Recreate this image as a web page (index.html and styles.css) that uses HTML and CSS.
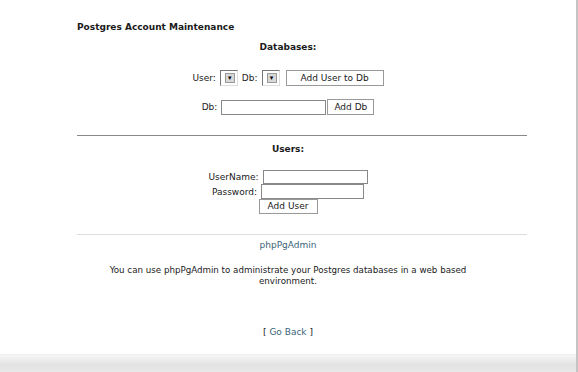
FILE: index.html
```html
<!DOCTYPE html>
<html lang="en">
<head>
  <meta charset="UTF-8" />
  <title>Postgres Account Maintenance</title>
  <link rel="stylesheet" href="styles.css">
</head>
<body>
  <div class="page">
    <h1 class="title">Postgres Account Maintenance</h1>

    <h2 class="heading">Databases:</h2>
    <div class="line line-user">
      <span class="label">User:</span>
      <span class="combo"><span class="combo-btn">&#9662;</span></span>
      <span class="label">Db:</span>
      <span class="combo"><span class="combo-btn">&#9662;</span></span>
      <button class="btn btn-wide">Add User to Db</button>
    </div>
    <div class="line line-db">
      <span class="label">Db:</span>
      <input class="field field-db" type="text" />
      <button class="btn btn-db">Add Db</button>
    </div>

    <hr class="rule" />

    <h2 class="heading heading-users">Users:</h2>
    <div class="users">
      <div class="line">
        <span class="label">UserName:</span>
        <input class="field field-user" type="text" />
      </div>
      <div class="line">
        <span class="label">Password:</span>
        <input class="field field-pass" type="password" />
      </div>
      <div class="line">
        <button class="btn btn-user">Add User</button>
      </div>
    </div>

    <hr class="rule rule-light" />

    <a class="link app-link" href="#">phpPgAdmin</a>
    <p class="note">You can use phpPgAdmin to administrate your Postgres databases in a web based<br>environment.</p>

    <div class="back">[ <a class="link" href="#">Go Back</a> ]</div>

    <div class="footer-bar"></div>
  </div>
</body>
</html>
```

FILE: styles.css
```css
* {
  margin: 0;
  padding: 0;
  box-sizing: border-box;
}

body {
  font-family: 'DejaVu Sans', Verdana, sans-serif;
  font-size: 9px;
  color: #1a1a1a;
  background: #fff;
}

.page {
  position: relative;
  width: 578px;
  height: 372px;
  border-right: 2px solid #c4c4c4;
  overflow: hidden;
}

.title {
  font-size: 9px;
  font-weight: bold;
  line-height: 12px;
  padding: 21px 0 0 77px;
}

.heading {
  font-size: 9px;
  font-weight: bold;
  line-height: 12px;
  text-align: center;
  margin-top: 8px;
}

.line {
  display: flex;
  justify-content: center;
  align-items: center;
  gap: 4px;
}

.label {
  line-height: 12px;
}

.line-user {
  margin-top: 17px;
  height: 16px;
}

.line-db {
  margin-top: 13px;
  height: 16px;
}

.combo {
  display: inline-flex;
  align-items: center;
  justify-content: flex-end;
  width: 18px;
  height: 16px;
  border: 1px solid #777;
  border-right-color: #ddd;
  border-bottom-color: #ddd;
  padding-right: 2px;
}

.combo-btn {
  width: 10px;
  height: 10px;
  background: #d8d8d8;
  border: 1px solid #999;
  font-size: 7px;
  line-height: 8px;
  text-align: center;
  color: #000;
}

.btn {
  font-family: inherit;
  font-size: 9px;
  color: #1a1a1a;
  background: #fff;
  border: 1px solid #999;
  height: 16px;
  line-height: 14px;
}

.btn-wide {
  width: 98px;
  margin-left: 2px;
}

.btn-db {
  width: 47px;
  margin-left: -3px;
}

.field {
  height: 15px;
  border: 1px solid #888;
  background: #fff;
}

.field-db {
  width: 105px;
}

.rule {
  border: 0;
  border-top: 1px solid #888;
  width: 450px;
  margin: 20px 0 0 77px;
}

.rule-light {
  border-top-color: #ddd;
  margin-top: 20px;
}

.heading-users {
  margin-top: 7px;
}

.users {
  margin-top: 14px;
}

.users .line {
  height: 15px;
}

.field-user {
  width: 105px;
  height: 14px;
}

.field-pass {
  width: 103px;
}

.btn-user {
  width: 59px;
  height: 15px;
  line-height: 13px;
}

.link {
  color: #3a6478;
  text-decoration: none;
}

.app-link {
  display: block;
  text-align: center;
  line-height: 12px;
  margin-top: 4px;
}

.note {
  font-size: 8.7px;
  text-align: center;
  line-height: 11px;
  margin-top: 14px;
}

.back {
  text-align: center;
  line-height: 12px;
  margin-top: 39px;
}

.footer-bar {
  position: absolute;
  left: 0;
  right: 0;
  bottom: 0;
  height: 18px;
  border-top: 1px solid #eee;
  background: linear-gradient(#f6f6f6, #e2e2e2 60%, #e8e8e8);
}
```
